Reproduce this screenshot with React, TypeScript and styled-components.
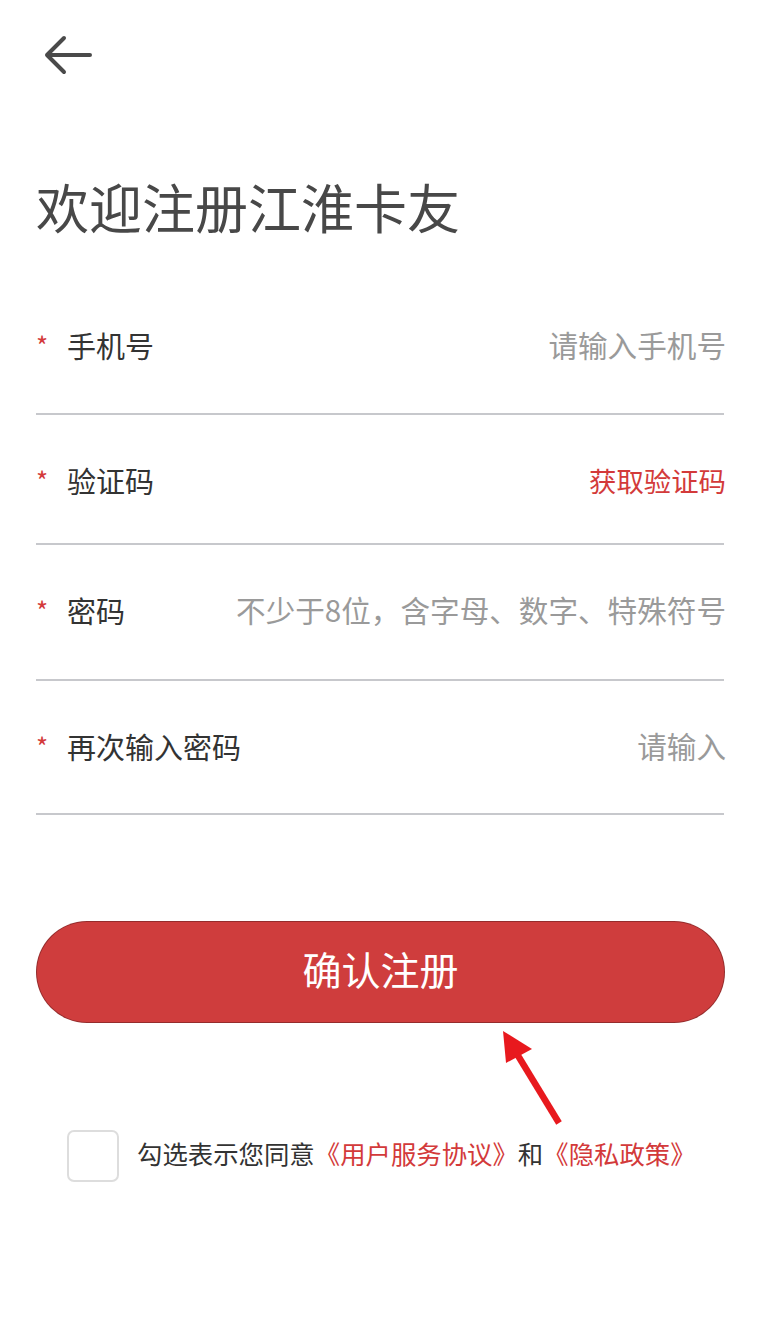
import styled, { createGlobalStyle } from "styled-components";

const GlobalStyle = createGlobalStyle`
  html, body {
    margin: 0;
    padding: 0;
    background: #ffffff;
  }
  * {
    box-sizing: border-box;
  }
  body {
    font-family: "Noto Sans CJK SC", "Noto Sans", sans-serif;
  }
`;

// page
const Page = styled.div`
  position: relative;
  width: 766px;
  min-height: 1327px;
  padding: 0 42px 0 36px;
  display: flex;
  flex-direction: column;
`;
const Header = styled.header`
  height: 80px;
  padding-top: 30px;
  padding-left: 7px;
`;
const BackButton = styled.button`
  width: 50px;
  height: 50px;
  padding: 0;
  border: none;
  background: none;
  display: block;
  cursor: pointer;
`;
const Title = styled.h1`
  margin: 95px 0 0;
  font-size: 53px;
  line-height: 62px;
  font-weight: 400;
  color: #484848;
`;

// form
const Form = styled.div`
  margin-top: 43px;
  display: flex;
  flex-direction: column;
`;
const Row = styled.div<{ $h: number }>`
  height: ${(p) => p.$h}px;
  padding-top: 45px;
  border-bottom: 2px solid #c7c8cc;
  display: flex;
  align-items: flex-start;
  justify-content: space-between;
  font-size: 29px;
  line-height: 40px;
`;
const Label = styled.div`
  display: flex;
  align-items: center;
  color: #333333;
`;
const Star = styled.span`
  width: 31px;
  color: #d33a3a;
  font-size: 26px;
`;
const Placeholder = styled.span`
  color: #9a9a9a;
  font-size: 29.6px;
  margin-right: -2px;
`;
const CodeLink = styled.span`
  color: #d33a3a;
  font-size: 27.4px;
  margin-right: -2px;
`;

// submit
const Submit = styled.button`
  margin-top: 106px;
  width: 689px;
  height: 102px;
  padding: 0 0 8px;
  border-radius: 51px;
  border: 1px solid rgba(0, 0, 0, 0.28);
  background: #cf3d3d;
  color: #ffffff;
  font-family: inherit;
  font-size: 39px;
  cursor: pointer;
`;

// agreement
const Agreement = styled.div`
  margin-top: 107px;
  padding-left: 31px;
  display: flex;
  align-items: center;
  gap: 18px;
  font-size: 25.4px;
  color: #333333;
`;
const CheckBox = styled.div`
  width: 52px;
  height: 52px;
  border: 2px solid #dddddd;
  border-radius: 7px;
  flex-shrink: 0;
`;
const AgreeText = styled.span`
  padding-bottom: 7px;
`;
const Red = styled.span`
  color: #d33a3a;
`;

// annotation arrow drawn over the screenshot
const Annotation = styled.svg`
  position: absolute;
  left: 490px;
  top: 1020px;
  pointer-events: none;
`;

const fields = [
  { label: "手机号", hint: "请输入手机号", h: 135 },
  { label: "验证码", hint: "", h: 130 },
  { label: "密码", hint: "不少于8位，含字母、数字、特殊符号", h: 136 },
  { label: "再次输入密码", hint: "请输入", h: 134 },
];

function App() {
  return (
    <Page>
      <GlobalStyle />
      <Header>
        <BackButton aria-label="返回">
          <svg width="50" height="50" viewBox="0 0 50 50" fill="none">
            <path
              d="M4 25H47M21 8L4 25L21 42"
              stroke="#4a4a4a"
              strokeWidth="4"
              strokeLinecap="round"
              strokeLinejoin="round"
            />
          </svg>
        </BackButton>
      </Header>
      <Title>欢迎注册江淮卡友</Title>
      <Form>
        {fields.map((f) => (
          <Row key={f.label} $h={f.h}>
            <Label>
              <Star>*</Star>
              {f.label}
            </Label>
            {f.hint ? (
              <Placeholder>{f.hint}</Placeholder>
            ) : (
              <CodeLink>获取验证码</CodeLink>
            )}
          </Row>
        ))}
      </Form>
      <Submit>确认注册</Submit>
      <Agreement>
        <CheckBox />
        <AgreeText>
          勾选表示您同意<Red>《用户服务协议》</Red>和<Red>《隐私政策》</Red>
        </AgreeText>
      </Agreement>
      <Annotation width="80" height="110" viewBox="0 0 80 110">
        <path d="M13 11L42 29L16 43Z" fill="#e8191e" />
        <path d="M27 34L69 103" stroke="#e8191e" strokeWidth="6.5" />
      </Annotation>
    </Page>
  );
}
export default App;
